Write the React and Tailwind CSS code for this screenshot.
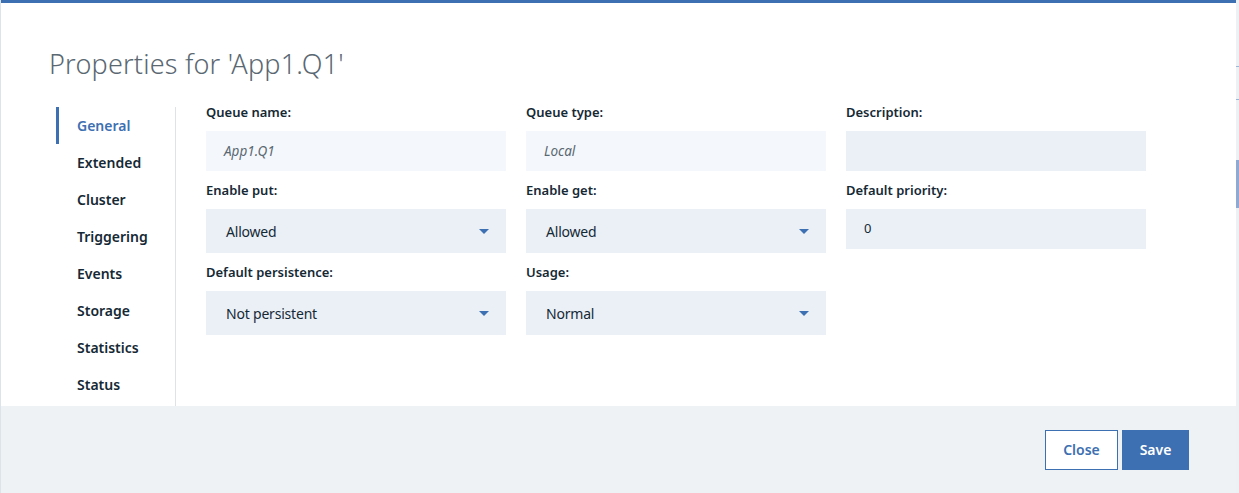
import React from "react";

const navItems = ["General", "Extended", "Cluster", "Triggering", "Events", "Storage", "Statistics", "Status"];

function Chevron() {
  return (
    <svg width="10" height="5" viewBox="0 0 10 5" className="shrink-0">
      <path d="M0 0 L10 0 L5 5 Z" fill="#3d70b2" />
    </svg>
  );
}

function Field({ label, children }) {
  return (
    <div className="flex flex-col">
      <div className="text-[13px] font-semibold text-[#152935] h-[18px] leading-[18px] mt-[10px] mb-[10px]">{label}</div>
      {children}
    </div>
  );
}

function ReadOnly({ value }) {
  return (
    <div className="h-[40px] bg-[#f4f7fb] px-[18px] flex items-center text-[13.5px] italic text-[#5a6872]">{value}</div>
  );
}

function TextInput({ value }) {
  return (
    <div className="h-[40px] bg-[#ebf0f7] px-[18px] flex items-center text-[13px] text-[#152935]">{value}</div>
  );
}

function Select({ value }) {
  return (
    <div className="h-[44px] bg-[#ebf0f7] pl-[20px] pr-[17px] flex items-center justify-between text-[14px] tracking-[-0.2px] text-[#152935]">
      <span>{value}</span>
      <Chevron />
    </div>
  );
}

export default function App() {
  return (
    <div className="flex w-[1239px] h-[493px] bg-[#e9edf1]" style={{ fontFamily: "'Noto Sans', sans-serif" }}>
      <div className="w-[1px] bg-[#dde3ea]" />
      <div className="w-[1235px] h-[493px] bg-white flex flex-col">
        <div className="h-[3px] bg-[#3d70b2]" />
        <div className="flex-1 flex flex-col">
          <h1 className="pl-[48px] pt-[43px] text-[27px] leading-[36px] font-light text-[#5a6872] tracking-[0.2px]">
            Properties for 'App1.Q1'
          </h1>
          <div className="flex mt-[25px] flex-1">
            <div className="w-[175px] pl-[55px] border-r border-[#dfe3e6] flex flex-col">
              {navItems.map((item, i) => (
                <div
                  key={item}
                  className={
                    i === 0
                      ? "h-[37px] border-l-[3px] border-[#3d70b2] pl-[18px] flex items-center text-[14px] font-semibold text-[#3d70b2]"
                      : "h-[37px] border-l-[3px] border-transparent pl-[18px] flex items-center text-[14px] font-semibold text-[#152935]"
                  }
                >
                  {item}
                </div>
              ))}
            </div>
            <div className="pl-[30px] grid grid-cols-[300px_300px_300px] gap-x-[20px] content-start -mt-[14px]">
              <Field label="Queue name:"><ReadOnly value="App1.Q1" /></Field>
              <Field label="Queue type:"><ReadOnly value="Local" /></Field>
              <Field label="Description:"><TextInput value="" /></Field>
              <Field label="Enable put:"><Select value="Allowed" /></Field>
              <Field label="Enable get:"><Select value="Allowed" /></Field>
              <Field label="Default priority:"><TextInput value="0" /></Field>
              <Field label="Default persistence:"><Select value="Not persistent" /></Field>
              <Field label="Usage:"><Select value="Normal" /></Field>
            </div>
          </div>
        </div>
        <div className="h-[87px] bg-[#eff2f5] flex items-center justify-end pr-[47px] gap-[4px]">
          <button className="h-[40px] w-[73px] border border-[#3d70b2] bg-white text-[#3d70b2] text-[14px] font-semibold">Close</button>
          <button className="h-[40px] w-[67px] bg-[#3d70b2] text-white text-[14px] font-semibold">Save</button>
        </div>
      </div>
      <div className="w-[3px] flex flex-col bg-[#eef1f4]">
        <div className="h-[66px]" />
        <div className="h-[1px] bg-[#9fb5d6]" />
        <div className="h-[32px]" />
        <div className="h-[1px] bg-[#9fb5d6]" />
        <div className="h-[60px]" />
        <div className="h-[48px] bg-[#8fa9d2]" />
      </div>
    </div>
  );
}
